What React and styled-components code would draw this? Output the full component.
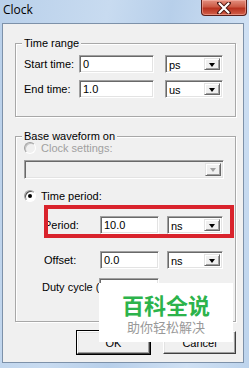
import React from "react";
import styled, { createGlobalStyle, css } from "styled-components";

const Global = createGlobalStyle`
  html, body { margin: 0; padding: 0; background: #bcd3ec; }
  body { font-family: "Liberation Sans", Arial, sans-serif; }
`;

const Window = styled.div`
  position: relative;
  width: 249px;
  height: 368px;
  box-sizing: border-box;
  display: flex;
  flex-direction: column;
  padding: 0 5px 5px 2px;
  background: linear-gradient(100deg, #b9d0ea 0%, #c8dbf0 35%, #b7cfea 55%, #cfe0f3 80%, #bcd3ec 100%);
  overflow: hidden;
`;

const TitleBar = styled.div`
  height: 23px;
  display: flex;
  align-items: flex-start;
  justify-content: space-between;
  flex-shrink: 0;
`;

const Title = styled.span`
  font-family: "Open Sans", "Noto Sans", sans-serif;
  font-size: 12px;
  color: #000;
  margin: 2px 0 0 1px;
  line-height: 16px;
`;

const CloseButton = styled.div`
  width: 46px;
  height: 16px;
  margin-right: -3px;
  box-sizing: border-box;
  border: 1px solid #5a1f1a;
  border-top: none;
  border-radius: 0 0 4px 4px;
  background: linear-gradient(180deg, #e39080 0%, #cc5a45 45%, #b8321f 55%, #d2604a 100%);
  box-shadow: inset 0 0 0 1px rgba(255, 200, 190, 0.45);
  display: flex;
  align-items: center;
  justify-content: center;
`;

const Client = styled.div`
  flex: 1;
  display: flex;
  flex-direction: column;
  background: #f0f0f0;
  border: 1px solid #7d91a9;
  font-size: 11px;
  color: #000;
`;

const Group = styled.div`
  display: flex;
  flex-direction: column;
  margin: ${(p) => p.$top}px 7px 0 12px;
  padding: 0 8px ${(p) => p.$bottom}px 8px;
  border: 1px solid #a8a8a8;
  box-shadow: 1px 1px 0 #fff, inset 1px 1px 0 #fff;
  height: ${(p) => p.$height}px;
  box-sizing: border-box;
`;

const Legend = styled.span`
  align-self: flex-start;
  margin: -7px 0 0 -2px;
  padding: 0 2px;
  background: #f0f0f0;
  line-height: 13px;
  height: 13px;
`;

const Row = styled.div`
  position: relative;
  display: flex;
  align-items: center;
  height: 18px;
  margin-top: ${(p) => p.$top}px;
  margin-left: ${(p) => p.$indent || 0}px;
`;

const Label = styled.span`
  width: ${(p) => p.$width}px;
  flex-shrink: 0;
  white-space: nowrap;
  overflow: hidden;
  color: ${(p) => (p.$disabled ? "#a0a0a0" : "#000")};
`;

const sunken = css`
  box-sizing: border-box;
  border: 1px solid;
  border-color: #a0a0a0 #ffffff #ffffff #a0a0a0;
  box-shadow: inset 1px 1px 0 #696969, inset -1px -1px 0 #e3e3e3;
`;

const Field = styled.div`
  ${sunken};
  width: ${(p) => p.$width}px;
  height: 18px;
  background: #fff;
  padding: 2px 0 0 3px;
  line-height: 13px;
  font-size: 11px;
  overflow: hidden;
`;

const Combo = styled.div`
  ${sunken};
  display: flex;
  align-items: center;
  justify-content: space-between;
  width: ${(p) => p.$width}px;
  height: ${(p) => p.$height || 18}px;
  margin-left: ${(p) => p.$gap || 0}px;
  background: ${(p) => (p.$disabled ? "#f0f0f0" : "#fff")};
  padding: 2px 2px 2px 3px;
`;

const ComboText = styled.span`
  line-height: 13px;
  padding-top: 2px;
`;

const DropButton = styled.div`
  width: 16px;
  height: 100%;
  box-sizing: border-box;
  background: #f0f0f0;
  border: 1px solid;
  border-color: #e3e3e3 #696969 #696969 #e3e3e3;
  box-shadow: inset 1px 1px 0 #fff, inset -1px -1px 0 #a0a0a0;
  display: flex;
  align-items: center;
  justify-content: center;
  &::after {
    content: "";
    border-left: 3.5px solid transparent;
    border-right: 3.5px solid transparent;
    border-top: 4px solid ${(p) => (p.$disabled ? "#a0a0a0" : "#000")};
    margin-top: 1px;
  }
`;

const RadioRow = styled.div`
  display: flex;
  align-items: center;
  height: 14px;
  margin-top: ${(p) => p.$top}px;
  gap: 5px;
  color: ${(p) => (p.$disabled ? "#a0a0a0" : "#000")};
`;

const Radio = styled.span`
  width: 12px;
  height: 12px;
  box-sizing: border-box;
  border-radius: 50%;
  border: 1px solid;
  border-color: #a0a0a0 #ffffff #ffffff #a0a0a0;
  background: ${(p) => (p.$disabled ? "#f0f0f0" : "#fff")};
  box-shadow: ${(p) => (p.$disabled ? "inset 1px 1px 0 #c4c4c4" : "inset 1px 1px 0 #505050")};
  display: flex;
  align-items: center;
  justify-content: center;
  flex-shrink: 0;
  &::after {
    content: "";
    display: ${(p) => (p.$checked ? "block" : "none")};
    width: 4px;
    height: 4px;
    border-radius: 50%;
    background: #000;
  }
`;

const Highlight = styled.div`
  position: absolute;
  left: 0;
  top: -11px;
  width: 190px;
  height: 33px;
  box-sizing: border-box;
  border: 4px solid #d9232c;
  pointer-events: none;
`;

const ButtonRow = styled.div`
  display: flex;
  justify-content: flex-end;
  gap: 13px;
  margin: 9px 7px 0 0;
`;

const Button = styled.div`
  width: 73px;
  height: 23px;
  box-sizing: border-box;
  background: #f0f0f0;
  border: 1px solid;
  border-color: #ffffff #404040 #404040 #ffffff;
  box-shadow: inset -1px -1px 0 #a0a0a0, inset 1px 1px 0 #e3e3e3;
  display: flex;
  align-items: center;
  justify-content: center;
  ${(p) => p.$default && css`outline: 1px solid #000;`}
`;

const Watermark = styled.div`
  position: absolute;
  left: 99px;
  top: 283px;
  width: 134px;
  height: 59px;
  background: #fff;
  display: flex;
  flex-direction: column;
  align-items: center;
  justify-content: center;
  gap: 4px;
  font-family: "Noto Sans CJK SC", sans-serif;
`;

const WmTitle = styled.span`
  font-size: 22px;
  font-weight: 700;
  color: #2cb34b;
  line-height: 24px;
`;

const WmSub = styled.span`
  font-size: 13px;
  color: #999;
  line-height: 14px;
`;

export default function App() {
  return (
    <>
      <Global />
      <Window>
        <TitleBar>
          <Title>Clock</Title>
          <CloseButton>
            <svg width="14" height="12" viewBox="0 0 14 12">
              <path d="M2 1 L12 11 M12 1 L2 11" stroke="#4a1510" strokeWidth="4" strokeLinecap="round" />
              <path d="M2.5 1.5 L11.5 10.5 M11.5 1.5 L2.5 10.5" stroke="#fff" strokeWidth="2.2" strokeLinecap="round" />
            </svg>
          </CloseButton>
        </TitleBar>
        <Client>
          <Group $top={19} $height={74} $bottom={11}>
            <Legend>Time range</Legend>
            <Row $top={5}>
              <Label $width={55}>Start time:</Label>
              <Field $width={75}>0</Field>
              <Combo $width={58} $gap={11}>
                <ComboText>ps</ComboText>
                <DropButton />
              </Combo>
            </Row>
            <Row $top={7}>
              <Label $width={55}>End time:</Label>
              <Field $width={75}>1.0</Field>
              <Combo $width={58} $gap={11}>
                <ComboText>us</ComboText>
                <DropButton />
              </Combo>
            </Row>
          </Group>
          <Group $top={19} $height={186} $bottom={19}>
            <Legend>Base waveform on</Legend>
            <RadioRow $top={-2} $disabled>
              <Radio $disabled />
              <span>Clock settings:</span>
            </RadioRow>
            <Combo $width={200} $height={19} $disabled style={{ marginTop: 5 }}>
              <ComboText />
              <DropButton $disabled />
            </Combo>
            <RadioRow $top={10}>
              <Radio $checked />
              <span>Time period:</span>
            </RadioRow>
            <Row $top={13} $indent={20}>
              <Label $width={56}>Period:</Label>
              <Field $width={59}>10.0</Field>
              <Combo $width={56} $gap={8}>
                <ComboText>ns</ComboText>
                <DropButton />
              </Combo>
              <Highlight />
            </Row>
            <Row $top={17} $indent={20}>
              <Label $width={56}>Offset:</Label>
              <Field $width={59}>0.0</Field>
              <Combo $width={56} $gap={8}>
                <ComboText>ns</ComboText>
                <DropButton />
              </Combo>
            </Row>
            <Row $top={9} $indent={18}>
              <Label $width={57}>Duty cycle (%):</Label>
              <Field $width={60}>50</Field>
            </Row>
          </Group>
          <ButtonRow>
            <Button $default>OK</Button>
            <Button>Cancel</Button>
          </ButtonRow>
        </Client>
        <Watermark>
          <WmTitle>百科全说</WmTitle>
          <WmSub>助你轻松解决</WmSub>
        </Watermark>
      </Window>
    </>
  );
}
